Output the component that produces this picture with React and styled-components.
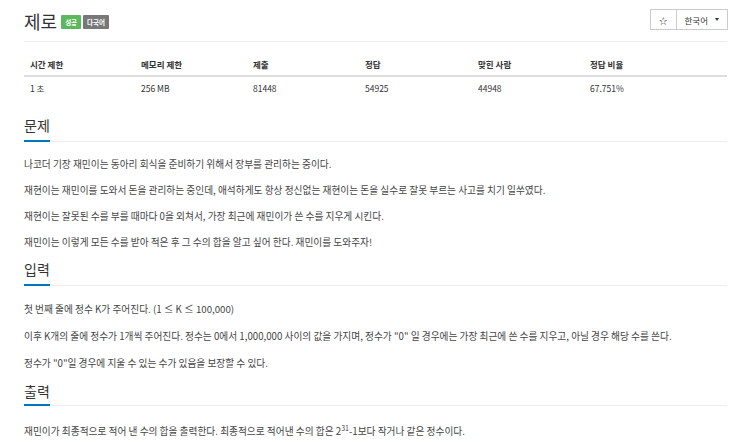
import React from 'react';
import styled, { createGlobalStyle } from 'styled-components';

const GlobalStyle = createGlobalStyle`
  html, body {
    margin: 0;
    padding: 0;
    background: #fff;
  }
  body {
    font-family: "Noto Sans CJK KR", "Noto Sans", sans-serif;
    color: #333;
  }
`;

const stats = [
  { label: '시간 제한', value: '1 초' },
  { label: '메모리 제한', value: '256 MB' },
  { label: '제출', value: '81448' },
  { label: '정답', value: '54925' },
  { label: '맞힌 사람', value: '44948' },
  { label: '정답 비율', value: '67.751%' },
];

export default function App() {
  return (
    <>
      <GlobalStyle />
      <Page>
        <TitleBar>
          <TitleGroup>
            <Title>제로</Title>
            <Badge color="#5cb85c">성공</Badge>
            <Badge color="#777">다국어</Badge>
          </TitleGroup>
          <BtnGroup>
            <Btn>☆</Btn>
            <Btn>
              한국어 <Caret />
            </Btn>
          </BtnGroup>
        </TitleBar>

        <Stats>
          {stats.map((s) => (
            <HeadCell key={s.label}>{s.label}</HeadCell>
          ))}
          {stats.map((s) => (
            <Cell key={s.label}>{s.value}</Cell>
          ))}
        </Stats>

        <Section>
          <Headline>
            <H2>문제</H2>
          </Headline>
          <Body top={14}>
            <P>나코더 기장 재민이는 동아리 회식을 준비하기 위해서 장부를 관리하는 중이다.</P>
            <P>재현이는 재민이를 도와서 돈을 관리하는 중인데, 애석하게도 항상 정신없는 재현이는 돈을 실수로 잘못 부르는 사고를 치기 일쑤였다.</P>
            <P>재현이는 잘못된 수를 부를 때마다 0을 외쳐서, 가장 최근에 재민이가 쓴 수를 지우게 시킨다.</P>
            <P>재민이는 이렇게 모든 수를 받아 적은 후 그 수의 합을 알고 싶어 한다. 재민이를 도와주자!</P>
          </Body>
        </Section>

        <Section>
          <Headline>
            <H2>입력</H2>
          </Headline>
          <Body top={15} gap={11}>
            <P>첫 번째 줄에 정수 K가 주어진다. (1 ≤ K ≤ 100,000)</P>
            <P>이후 K개의 줄에 정수가 1개씩 주어진다. 정수는 0에서 1,000,000 사이의 값을 가지며, 정수가 "0" 일 경우에는 가장 최근에 쓴 수를 지우고, 아닐 경우 해당 수를 쓴다.</P>
            <P>정수가 "0"일 경우에 지울 수 있는 수가 있음을 보장할 수 있다.</P>
          </Body>
        </Section>

        <Section>
          <Headline>
            <H2 tight>출력</H2>
          </Headline>
          <Body top={17}>
            <P>재민이가 최종적으로 적어 낸 수의 합을 출력한다. 최종적으로 적어낸 수의 합은 2<Sup>31</Sup>-1보다 작거나 같은 정수이다.</P>
          </Body>
        </Section>
      </Page>
    </>
  );
}

const Page = styled.div`
  width: 703px;
  padding: 0 23px 0 24px;
`;

const TitleBar = styled.div`
  display: flex;
  justify-content: space-between;
  align-items: flex-start;
  height: 41px;
  border-bottom: 1px solid #eee;
`;

const TitleGroup = styled.div`
  display: flex;
  align-items: center;
  gap: 2px;
  padding-top: 9px;
`;

const Title = styled.h1`
  margin: 0 2px 0 0;
  font-size: 18px;
  font-weight: 400;
  line-height: 24px;
  color: #333;
`;

const Badge = styled.span`
  display: inline-flex;
  align-items: center;
  height: 14px;
  padding: 0 4px;
  margin-top: 2px;
  background: ${({ color }) => color};
  color: #fff;
  font-size: 6.5px;
  font-weight: 700;
  border-radius: 1px;
`;

const BtnGroup = styled.div`
  display: flex;
  margin-top: 9px;
  margin-right: -1px;
`;

const Btn = styled.div`
  display: flex;
  align-items: center;
  gap: 7px;
  height: 19px;
  padding: 0 8px;
  border: 1px solid #ccc;
  background: #fff;
  font-size: 8.5px;
  color: #333;
  & + & {
    margin-left: -1px;
  }
`;

const Caret = styled.span`
  display: inline-block;
  width: 0;
  height: 0;
  border-left: 2.5px solid transparent;
  border-right: 2.5px solid transparent;
  border-top: 3px solid #333;
`;

const Stats = styled.div`
  display: grid;
  grid-template-columns: 111px 112px 112px 113px 112px 1fr;
  margin-top: 11px;
  font-size: 8.5px;
`;

const HeadCell = styled.div`
  padding: 5px 6px;
  line-height: 12px;
  font-weight: 700;
  border-bottom: 2px solid #ddd;
`;

const Cell = styled.div`
  padding: 5px 6px;
  line-height: 12px;
  color: #333;
`;

const Section = styled.section`
  margin-top: 17px;
  & + & {
    margin-top: 10px;
  }
`;

const Headline = styled.div`
  border-bottom: 1px solid #eee;
  display: flex;
`;

const H2 = styled.h2`
  margin: 0 0 -1px;
  padding-bottom: ${({ tight }) => (tight ? 4 : 6)}px;
  font-size: 14px;
  font-weight: 400;
  line-height: 18px;
  color: #333;
  border-bottom: 2px solid #0076c0;
`;

const Body = styled.div`
  padding-top: ${({ top }) => top || 12}px;
  & > p {
    margin-bottom: ${({ gap }) => gap || 10}px;
  }
`;

const P = styled.p`
  margin: 0 0 10px;
  font-size: 9.7px;
  line-height: 16px;
  color: #444;
`;

const Sup = styled.sup`
  font-size: 7px;
  line-height: 0;
`;
